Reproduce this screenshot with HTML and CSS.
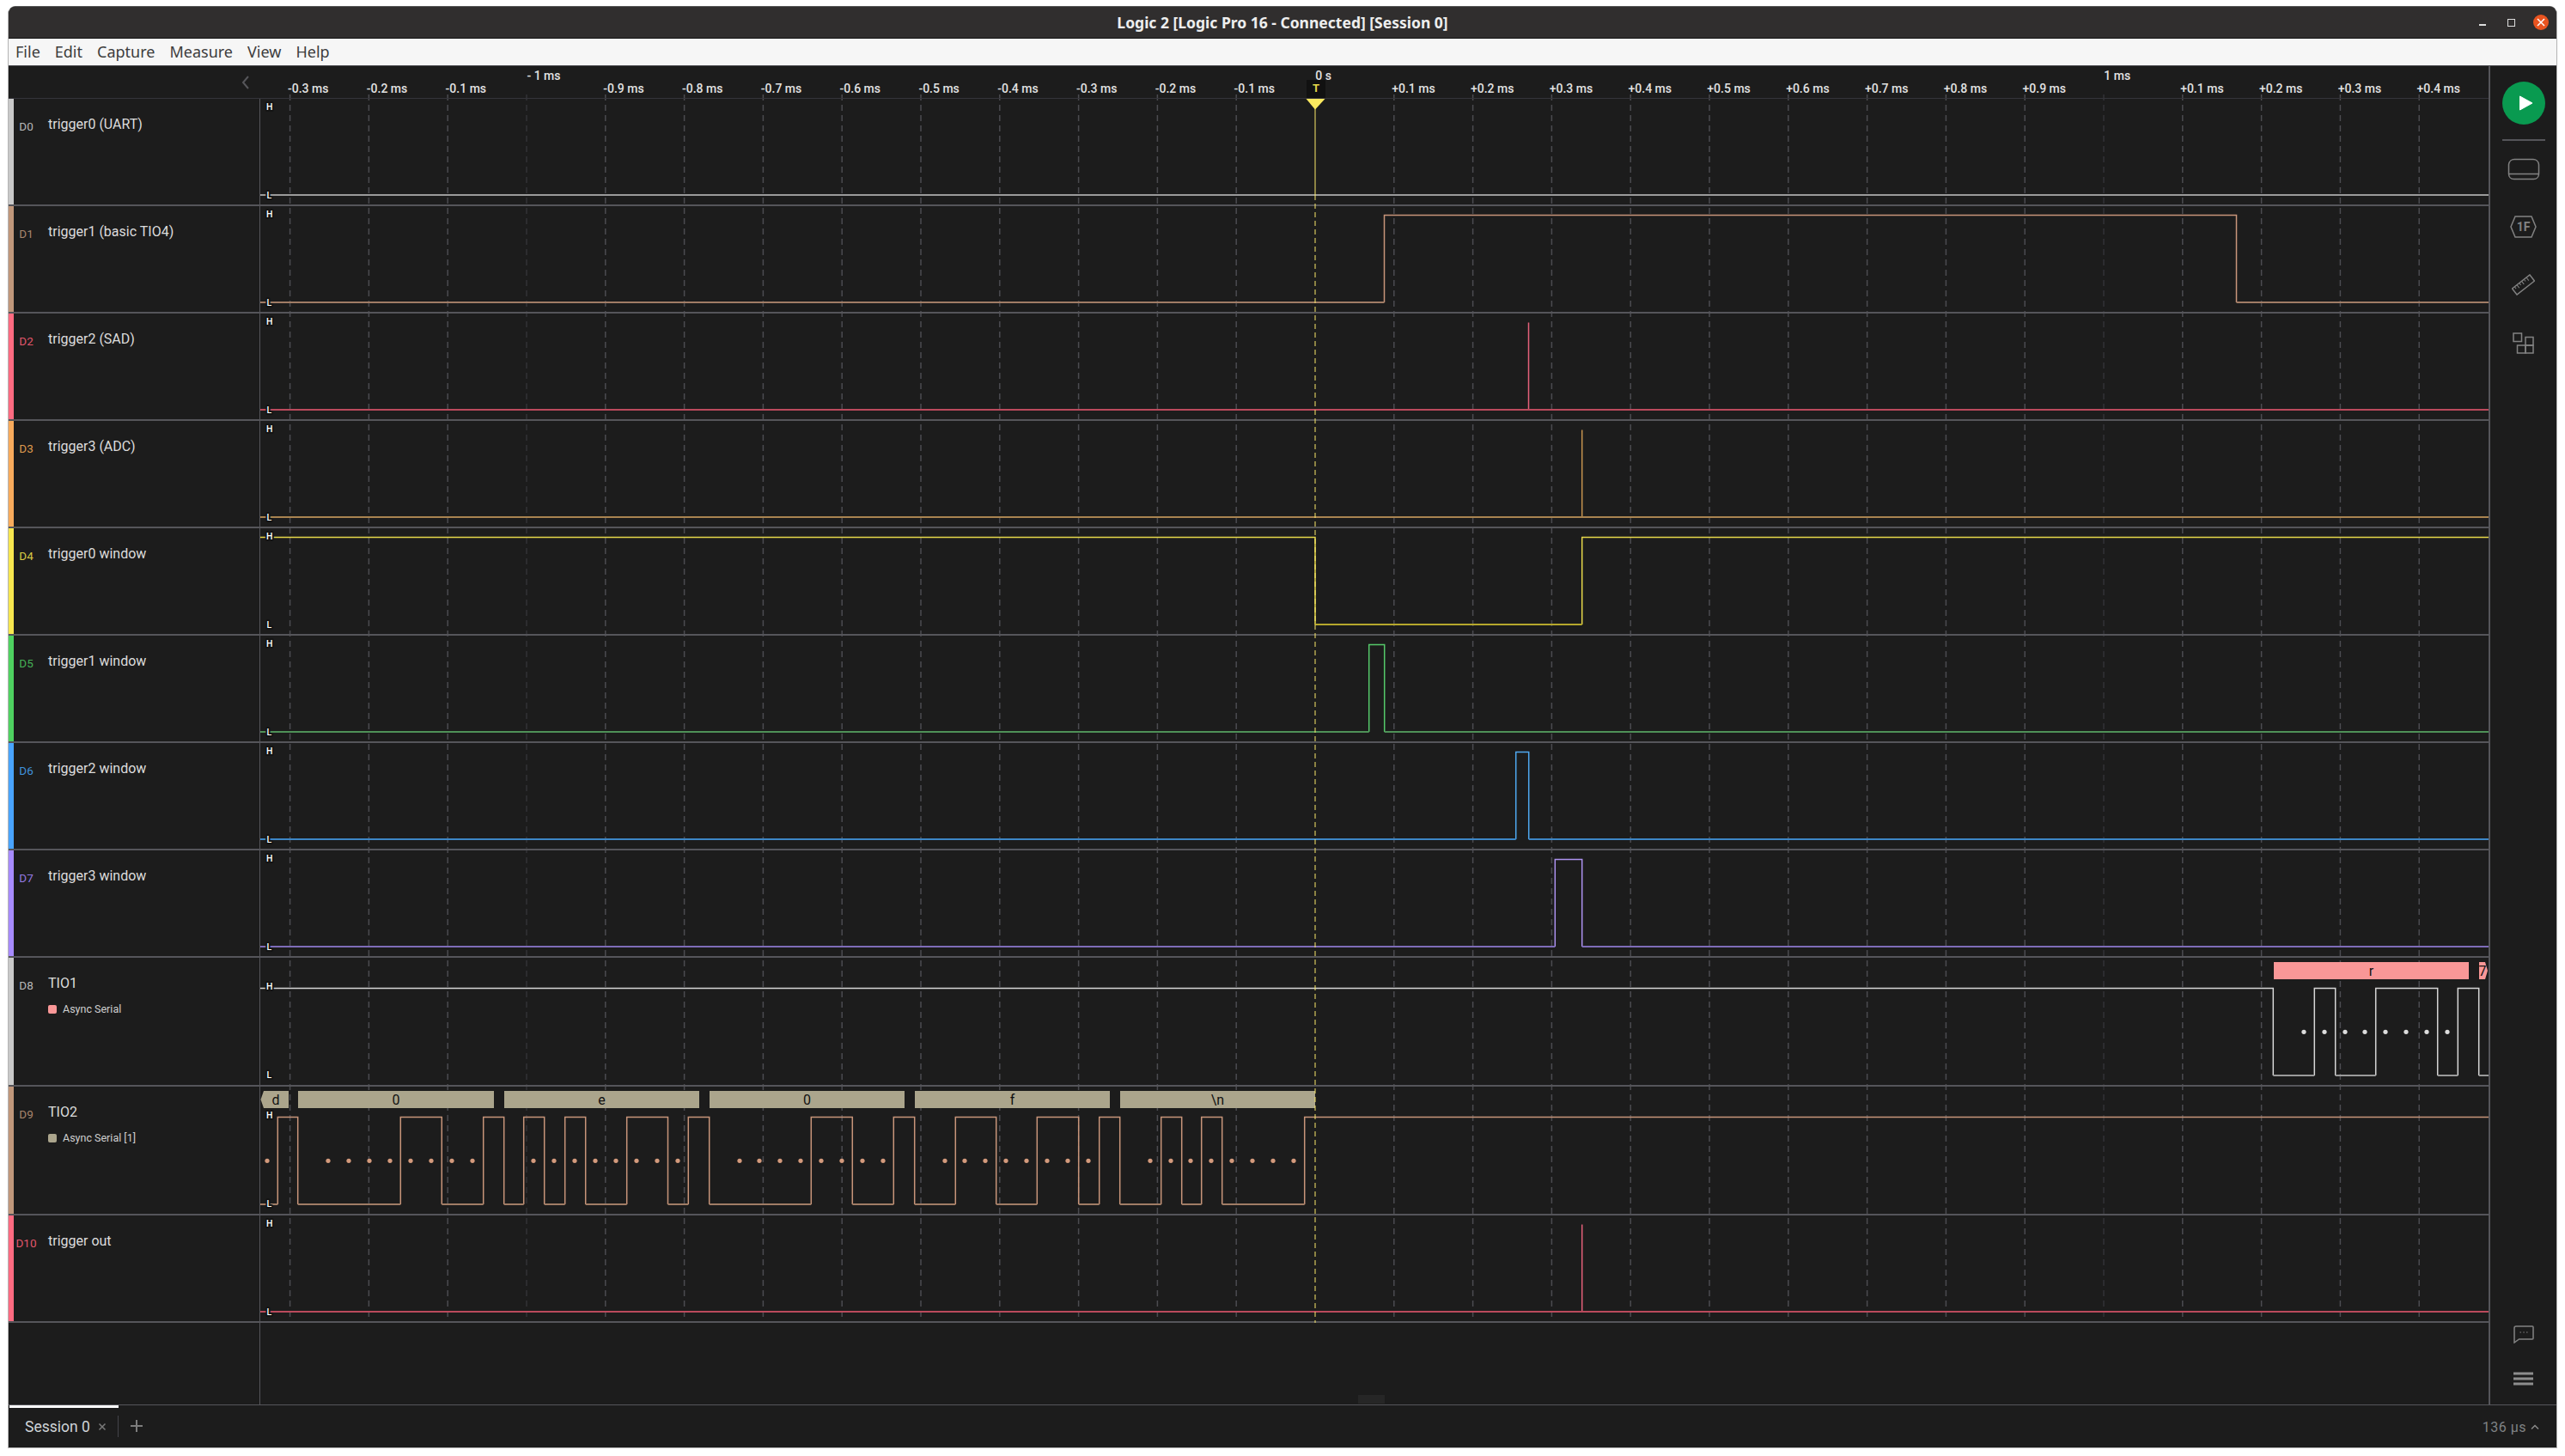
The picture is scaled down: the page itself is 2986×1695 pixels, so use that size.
FILE: index.html
```html
<!DOCTYPE html>
<html lang="en">
<head>
    <meta charset="UTF-8">
    <title>Logic 2 [Logic Pro 16 - Connected] [Session 0]</title>
    <link rel="stylesheet" href="styles.css">
</head>
<body>
<div class="window">
    <!-- Title bar -->
    <header class="titlebar">
        <span class="title">Logic 2 [Logic Pro 16 - Connected] [Session 0]</span>
        <div class="win-buttons">
            <span class="win-min"></span>
            <span class="win-max"></span>
            <span class="win-close">
                <svg width="10" height="10" viewBox="0 0 10 10"><path d="M1 1l8 8M9 1l-8 8"/></svg>
            </span>
        </div>
    </header>

    <nav class="menubar">
        <span>File</span><span>Edit</span><span>Capture</span><span>Measure</span><span>View</span><span>Help</span>
    </nav>

    <div class="main">
        <div class="content">
            <!-- Time grid, sits behind the rows -->
            <svg class="grid" viewBox="10 77 2887 1463">
                <path class="grid-line" d="M337.6 110V1537M429.4 110V1537M521.2 110V1537M704.8 110V1537M796.6 110V1537M888.4 110V1537M980.2 110V1537M1072 110V1537M1163.8 110V1537M1255.6 110V1537M1347.4 110V1537M1439.2 110V1537M1622.8 110V1537M1714.6 110V1537M1806.4 110V1537M1898.2 110V1537M1990 110V1537M2081.8 110V1537M2173.6 110V1537M2265.4 110V1537M2357.2 110V1537M2540.8 110V1537M2632.6 110V1537M2724.4 110V1537M2816.2 110V1537"/>
                <path class="grid-major" d="M613 110V1537M2449 110V1537"/>
            </svg>

            <div class="ruler">
                <div class="ruler-side">
                    <svg width="10" height="16" viewBox="0 0 10 16"><path d="M8 1L2 8l6 7"/></svg>
                </div>
                <div class="ticks">
                    <span class="tick">-0.3 ms</span><span class="tick">-0.2 ms</span><span class="tick">-0.1 ms</span>
                    <span class="tick major">- 1 ms</span>
                    <span class="tick">-0.9 ms</span><span class="tick">-0.8 ms</span><span class="tick">-0.7 ms</span><span class="tick">-0.6 ms</span><span class="tick">-0.5 ms</span><span class="tick">-0.4 ms</span><span class="tick">-0.3 ms</span><span class="tick">-0.2 ms</span><span class="tick">-0.1 ms</span>
                    <span class="tick major">0 s</span>
                    <span class="tick">+0.1 ms</span><span class="tick">+0.2 ms</span><span class="tick">+0.3 ms</span><span class="tick">+0.4 ms</span><span class="tick">+0.5 ms</span><span class="tick">+0.6 ms</span><span class="tick">+0.7 ms</span><span class="tick">+0.8 ms</span><span class="tick">+0.9 ms</span>
                    <span class="tick major">1 ms</span>
                    <span class="tick">+0.1 ms</span><span class="tick">+0.2 ms</span><span class="tick">+0.3 ms</span><span class="tick">+0.4 ms</span>
                </div>
            </div>

            <!-- D0 -->
            <div class="row ch-grey">
                <div class="row-label"><span class="ch-num">D0</span><div class="ch-info"><div class="ch-name">trigger0 (UART)</div></div></div>
                <div class="row-trace"><svg class="wave" viewBox="303 0 2594 123">
                    <path class="low" d="M303 112H2897"/>
                    <text class="hl" x="310" y="12.5">H</text><text class="hl" x="310.5" y="115.5">L</text>
                </svg></div>
            </div>
            <!-- D1 -->
            <div class="row ch-tan">
                <div class="row-label"><span class="ch-num">D1</span><div class="ch-info"><div class="ch-name">trigger1 (basic TIO4)</div></div></div>
                <div class="row-trace"><svg class="wave" viewBox="303 0 2594 123">
                    <path class="high" d="M1611.5 112V10.5H2603.5V112"/>
                    <path class="low" d="M303 112H1611.5M2603.5 112H2897"/>
                    <text class="hl" x="310" y="12.5">H</text><text class="hl" x="310.5" y="115.5">L</text>
                </svg></div>
            </div>
            <!-- D2 -->
            <div class="row ch-red">
                <div class="row-label"><span class="ch-num">D2</span><div class="ch-info"><div class="ch-name">trigger2 (SAD)</div></div></div>
                <div class="row-trace"><svg class="wave" viewBox="303 0 2594 123">
                    <path class="high" d="M1779.5 112V10.5"/>
                    <path class="low" d="M303 112H2897"/>
                    <text class="hl" x="310" y="12.5">H</text><text class="hl" x="310.5" y="115.5">L</text>
                </svg></div>
            </div>
            <!-- D3 -->
            <div class="row ch-orange">
                <div class="row-label"><span class="ch-num">D3</span><div class="ch-info"><div class="ch-name">trigger3 (ADC)</div></div></div>
                <div class="row-trace"><svg class="wave" viewBox="303 0 2594 123">
                    <path class="high" d="M1841.7 112V10.5"/>
                    <path class="low" d="M303 112H2897"/>
                    <text class="hl" x="310" y="12.5">H</text><text class="hl" x="310.5" y="115.5">L</text>
                </svg></div>
            </div>
            <!-- D4 -->
            <div class="row ch-yellow">
                <div class="row-label"><span class="ch-num">D4</span><div class="ch-info"><div class="ch-name">trigger0 window</div></div></div>
                <div class="row-trace"><svg class="wave" viewBox="303 0 2594 123">
                    <path class="high" d="M303 10.5H1531V112M1841.7 112V10.5H2897"/>
                    <path class="low" d="M1531 112H1841.7"/>
                    <text class="hl" x="310" y="12.5">H</text><text class="hl" x="310.5" y="115.5">L</text>
                </svg></div>
            </div>
            <!-- D5 -->
            <div class="row ch-green">
                <div class="row-label"><span class="ch-num">D5</span><div class="ch-info"><div class="ch-name">trigger1 window</div></div></div>
                <div class="row-trace"><svg class="wave" viewBox="303 0 2594 123">
                    <path class="high" d="M1593.7 112V10.5H1611.7V112"/>
                    <path class="low" d="M303 112H1593.7M1611.7 112H2897"/>
                    <text class="hl" x="310" y="12.5">H</text><text class="hl" x="310.5" y="115.5">L</text>
                </svg></div>
            </div>
            <!-- D6 -->
            <div class="row ch-blue">
                <div class="row-label"><span class="ch-num">D6</span><div class="ch-info"><div class="ch-name">trigger2 window</div></div></div>
                <div class="row-trace"><svg class="wave" viewBox="303 0 2594 123">
                    <path class="high" d="M1764.7 112V10.5H1779.7V112"/>
                    <path class="low" d="M303 112H1764.7M1779.7 112H2897"/>
                    <text class="hl" x="310" y="12.5">H</text><text class="hl" x="310.5" y="115.5">L</text>
                </svg></div>
            </div>
            <!-- D7 -->
            <div class="row ch-purple">
                <div class="row-label"><span class="ch-num">D7</span><div class="ch-info"><div class="ch-name">trigger3 window</div></div></div>
                <div class="row-trace"><svg class="wave" viewBox="303 0 2594 123">
                    <path class="high" d="M1810.3 112V10.5H1841.7V112"/>
                    <path class="low" d="M303 112H1810.3M1841.7 112H2897"/>
                    <text class="hl" x="310" y="12.5">H</text><text class="hl" x="310.5" y="115.5">L</text>
                </svg></div>
            </div>
            <!-- D8 with analyzer -->
            <div class="row row-tall ch-grey">
                <div class="row-label"><span class="ch-num">D8</span><div class="ch-info">
                    <div class="ch-name">TIO1</div>
                    <div class="analyzer"><i class="swatch swatch-pink"></i>Async Serial</div>
                </div></div>
                <div class="row-trace"><svg class="wave" viewBox="303 0 2594 148">
                    <rect class="frame-pink" x="2647" y="5" width="227" height="20"/>
                    <polygon class="frame-pink" points="2886,5 2893,5 2896,15 2893,25 2886,25"/>
                    <text class="frame-text" x="2760.5" y="20.5">r</text>
                    <text class="frame-text" x="2890" y="20.5">7</text>
                    <path class="high" d="M303 35.5H2646.3V137M2694.3 137V35.5H2718.7V137M2765.7 137V35.5H2837.7V137M2861.3 137V35.5H2885.7V137"/>
                    <path class="low" d="M2646.3 137H2694.3M2718.7 137H2765.7M2837.7 137H2861.3M2885.7 137H2897"/>
                    <g class="dots">
                        <circle cx="2682" cy="86.3" r="2.6"/><circle cx="2706" cy="86.3" r="2.6"/><circle cx="2730" cy="86.3" r="2.6"/><circle cx="2753" cy="86.3" r="2.6"/><circle cx="2777" cy="86.3" r="2.6"/><circle cx="2801" cy="86.3" r="2.6"/><circle cx="2825" cy="86.3" r="2.6"/><circle cx="2849" cy="86.3" r="2.6"/>
                    </g>
                    <text class="hl" x="310" y="37">H</text><text class="hl" x="310.5" y="140">L</text>
                </svg></div>
            </div>
            <!-- D9 with analyzer -->
            <div class="row row-tall ch-tan">
                <div class="row-label"><span class="ch-num">D9</span><div class="ch-info">
                    <div class="ch-name">TIO2</div>
                    <div class="analyzer"><i class="swatch swatch-khaki"></i>Async Serial [1]</div>
                </div></div>
                <div class="row-trace"><svg class="wave" viewBox="303 0 2594 148">
                    <polygon class="frame-khaki" points="303.5,15 307,5 336,5 336,25 307,25"/>
                    <rect class="frame-khaki" x="347" y="5" width="228" height="20"/>
                    <rect class="frame-khaki" x="587" y="5" width="227" height="20"/>
                    <rect class="frame-khaki" x="826" y="5" width="227" height="20"/>
                    <rect class="frame-khaki" x="1065" y="5" width="227" height="20"/>
                    <rect class="frame-khaki" x="1304" y="5" width="227" height="20"/>
                    <text class="frame-text" x="321" y="20.5">d</text>
                    <text class="frame-text" x="461" y="20.5">0</text>
                    <text class="frame-text" x="700.5" y="20.5">e</text>
                    <text class="frame-text" x="939.5" y="20.5">0</text>
                    <text class="frame-text" x="1178.5" y="20.5">f</text>
                    <text class="frame-text" x="1417.5" y="20.5">\n</text>
                    <path class="high" d="M323.3 137V35.5H346.7V137M466.3 137V35.5H514.3V137M562.7 137V35.5H586.7V137M609.7 137V35.5H633.7V137M657.7 137V35.5H681.7V137M729.7 137V35.5H777.5V137M801.3 137V35.5H825.7V137M944.3 137V35.5H992.3V137M1040.3 137V35.5H1064.7V137M1112.3 137V35.5H1159.7V137M1207.3 137V35.5H1255.7V137M1279.7 137V35.5H1303.7V137M1351.7 137V35.5H1375.7V137M1398.7 137V35.5H1422.7V137M1518.7 137V35.5H2897"/>
                    <path class="low" d="M303 137H323.3M346.7 137H466.3M514.3 137H562.7M586.7 137H609.7M633.7 137H657.7M681.7 137H729.7M777.5 137H801.3M825.7 137H944.3M992.3 137H1040.3M1064.7 137H1112.3M1159.7 137H1207.3M1255.7 137H1279.7M1303.7 137H1351.7M1375.7 137H1398.7M1422.7 137H1518.7"/>
                    <g class="dots">
                        <circle cx="311" cy="86.3" r="2.6"/><circle cx="382" cy="86.3" r="2.6"/><circle cx="406" cy="86.3" r="2.6"/><circle cx="430" cy="86.3" r="2.6"/><circle cx="454" cy="86.3" r="2.6"/><circle cx="478" cy="86.3" r="2.6"/><circle cx="502" cy="86.3" r="2.6"/><circle cx="526" cy="86.3" r="2.6"/><circle cx="550" cy="86.3" r="2.6"/>
                        <circle cx="621" cy="86.3" r="2.6"/><circle cx="645" cy="86.3" r="2.6"/><circle cx="669" cy="86.3" r="2.6"/><circle cx="693" cy="86.3" r="2.6"/><circle cx="717" cy="86.3" r="2.6"/><circle cx="741" cy="86.3" r="2.6"/><circle cx="765" cy="86.3" r="2.6"/><circle cx="789" cy="86.3" r="2.6"/>
                        <circle cx="861" cy="86.3" r="2.6"/><circle cx="884" cy="86.3" r="2.6"/><circle cx="908" cy="86.3" r="2.6"/><circle cx="932" cy="86.3" r="2.6"/><circle cx="956" cy="86.3" r="2.6"/><circle cx="980" cy="86.3" r="2.6"/><circle cx="1004" cy="86.3" r="2.6"/><circle cx="1028" cy="86.3" r="2.6"/>
                        <circle cx="1100" cy="86.3" r="2.6"/><circle cx="1123" cy="86.3" r="2.6"/><circle cx="1147" cy="86.3" r="2.6"/><circle cx="1171" cy="86.3" r="2.6"/><circle cx="1195" cy="86.3" r="2.6"/><circle cx="1219" cy="86.3" r="2.6"/><circle cx="1243" cy="86.3" r="2.6"/><circle cx="1267" cy="86.3" r="2.6"/>
                        <circle cx="1339" cy="86.3" r="2.6"/><circle cx="1363" cy="86.3" r="2.6"/><circle cx="1386" cy="86.3" r="2.6"/><circle cx="1410" cy="86.3" r="2.6"/><circle cx="1434" cy="86.3" r="2.6"/><circle cx="1458" cy="86.3" r="2.6"/><circle cx="1482" cy="86.3" r="2.6"/><circle cx="1506" cy="86.3" r="2.6"/>
                    </g>
                    <text class="hl" x="310" y="37">H</text><text class="hl" x="310.5" y="140">L</text>
                </svg></div>
            </div>
            <!-- D10 -->
            <div class="row ch-red">
                <div class="row-label"><span class="ch-num">D10</span><div class="ch-info"><div class="ch-name">trigger out</div></div></div>
                <div class="row-trace"><svg class="wave" viewBox="303 0 2594 123">
                    <path class="high" d="M1841.7 112V10.5"/>
                    <path class="low" d="M303 112H2897"/>
                    <text class="hl" x="310" y="12.5">H</text><text class="hl" x="310.5" y="115.5">L</text>
                </svg></div>
            </div>

            <div class="row-blank">
                <div class="blank-side"></div>
                <div class="grabber"></div>
            </div>

            <!-- Trigger marker, over the rows -->
            <svg class="cursor" viewBox="10 77 2887 1463">
                <path class="cursor-solid" d="M1531 125V227"/>
                <path class="cursor-dash" d="M1531 227V1540"/>
                <polygon class="cursor-head" points="1520.5,115 1542.5,115 1531,127.5"/>
            </svg>
            <span class="trigger-t">T</span>
        </div>

        <!-- Right tool strip -->
        <aside class="sidebar">
            <div class="play">
                <svg width="18" height="18" viewBox="0 0 18 18"><path d="M2.5 1L17 9 2.5 17z" fill="#fff" stroke="#fff" stroke-linejoin="round"/></svg>
            </div>
            <div class="side-divider"></div>
            <div class="tool">
                <svg width="38" height="26" viewBox="0 0 38 26"><path d="M8 1.5h22c3 0 6 2 6.5 6v11c0 3.500-2.500 6-6 6h-23c-3.500 0-6-2.500-6-6v-11c.5-4 3.500-6 6.500-6zM1.500 18.500h35"/></svg>
            </div>
            <div class="tool">
                <svg width="31" height="26" viewBox="0 0 31 26"><polygon points="6,1 25,1 30,13 25,25 6,25 1,13"/><text class="tool-text" x="15.5" y="18">1F</text></svg>
            </div>
            <div class="tool">
                <svg width="27" height="25" viewBox="0 0 27 25"><g transform="rotate(-38 13.5 12.5)"><rect x="0.5" y="8" width="26" height="9"/><path class="thin" d="M4 8v3M7.5 8v4.5M11 8v3M14.5 8v4.5M18 8v3M21.5 8v4.5"/></g></svg>
            </div>
            <div class="tool">
                <svg width="25" height="25" viewBox="0 0 25 25"><rect x="1" y="1" width="9.5" height="9.5"/><rect x="15" y="5.5" width="9" height="9.5"/><rect x="5.5" y="15" width="9.5" height="9"/><rect x="15" y="15" width="9" height="9"/></svg>
            </div>
            <div class="side-bottom">
                <div class="tool-small">
                    <svg width="24" height="21" viewBox="0 0 24 21"><path d="M3 1h19a1 1 0 0 1 1 1v13a1 1 0 0 1-1 1H6.500L1 20V3a2 2 0 0 1 2-2z"/><path class="thin" d="M7.5 8h1.500M11.300 8h1.500M15 8h1.500"/></svg>
                </div>
                <div class="tool-small">
                    <svg width="25" height="16" viewBox="0 0 25 16"><path class="bars" d="M1 2h23M1 8h23M1 14h23"/></svg>
                </div>
            </div>
        </aside>
    </div>

    <footer class="footer">
        <div class="tab">
            <span class="tab-name">Session 0</span>
            <svg class="tab-x" width="10" height="10" viewBox="0 0 10 10"><path d="M1.5 1.5l7 7M8.5 1.5l-7 7"/></svg>
        </div>
        <svg class="tab-add" width="14" height="14" viewBox="0 0 14 14"><path d="M7 0v14M0 7h14"/></svg>
        <div class="status">
            <span>136 µs</span>
            <svg width="10" height="7" viewBox="0 0 10 7"><path d="M1 5.500l4-4 4 4"/></svg>
        </div>
    </footer>
</div>
</body>
</html>
```

FILE: styles.css
```css
html, body {
    margin: 0;
    background-color: #fff;
    height: 100%;
}
body {
    font-family: Roboto, "Liberation Sans", sans-serif;
    overflow: hidden;
}
.window {
    box-sizing: border-box;
    width: 2968px;
    height: 1679px;
    margin: 7px 0 0 9px;
    border: 1px solid #b4b4b4;
    border-top-color: #555;
    border-radius: 9px 9px 0 0;
    background-color: #1c1c1c;
    display: flex;
    flex-direction: column;
    overflow: hidden;
}

/* Title bar */
.titlebar {
    box-sizing: border-box;
    flex: none;
    height: 37px;
    background-color: #302e2e;
    border-bottom: 1px solid #111;
    position: relative;
    display: flex;
    align-items: center;
    justify-content: center;
}
.title {
    font-family: "Noto Sans", sans-serif;
    font-weight: 700;
    font-size: 17.5px;
    color: #eee;
}
.win-buttons {
    position: absolute;
    right: 9px;
    top: 9px;
    display: flex;
    align-items: center;
    gap: 21px;
}
.win-min {
    width: 8px;
    height: 2px;
    margin-top: 6px;
    background-color: #ddd;
}
.win-max {
    box-sizing: border-box;
    width: 9px;
    height: 9px;
    border: 1.5px solid #ddd;
    margin-left: 4px;
}
.win-close {
    width: 18px;
    height: 18px;
    border-radius: 50%;
    background-color: #e95420;
    display: flex;
    align-items: center;
    justify-content: center;
}
.win-close path {
    stroke: #fff;
    stroke-width: 1.5;
}

.menubar {
    box-sizing: border-box;
    flex: none;
    height: 32px;
    background-color: #f6f6f6;
    border-bottom: 1px solid #4a4a4e;
    display: flex;
    align-items: center;
    gap: 17px;
    padding: 0 0 1px 8px;
    font-family: "Noto Sans", sans-serif;
    font-size: 18px;
    color: #3d3d3d;
}

.main {
    flex: 1;
    display: flex;
    min-height: 0;
}
.content {
    flex: 1;
    position: relative;
    display: flex;
    flex-direction: column;
    min-width: 0;
}

/* Time grid and trigger cursor */
.grid, .cursor {
    position: absolute;
    left: 0;
    top: 0;
    width: 2887px;
    height: 1463px;
    pointer-events: none;
}
.grid-line {
    stroke: #4b4b50;
    stroke-width: 1.5;
    stroke-dasharray: 7 5;
    fill: none;
}
.grid-major {
    stroke: #323236;
    stroke-width: 1.5;
    stroke-dasharray: 7 5;
    fill: none;
}
.cursor {
    z-index: 3;
}
.cursor-solid {
    stroke: #fbe96a;
    stroke-width: 1;
}
.cursor-dash {
    stroke: #fbe96a;
    stroke-width: 1;
    stroke-dasharray: 6 4;
}
.cursor-head {
    fill: #fbe95f;
}
.trigger-t {
    position: absolute;
    left: 1511px;
    top: 16px;
    z-index: 3;
    box-sizing: border-box;
    width: 22px;
    height: 21px;
    background-color: #111;
    color: #e6d94a;
    font-size: 13px;
    font-weight: 700;
    line-height: 20px;
    text-align: center;
}

/* Ruler */
.ruler {
    box-sizing: border-box;
    flex: none;
    height: 38px;
    border-bottom: 1px solid #34343a;
    display: flex;
    position: relative;
}
.ruler-side {
    box-sizing: border-box;
    flex: none;
    width: 292px;
    display: flex;
    justify-content: flex-end;
    padding: 11px 11px 0 0;
}
.ruler-side svg {
    height: 16px;
}
.ruler-side path {
    fill: none;
    stroke: #56565a;
    stroke-width: 2;
}
.ticks {
    display: flex;
    margin-left: 33px;
}
.tick {
    box-sizing: border-box;
    flex: 0 0 91.8px;
    padding-top: 18px;
    font-size: 14px;
    font-weight: 500;
    line-height: 16px;
    color: #e2e2e2;
    white-space: nowrap;
}
.tick.major {
    padding: 3px 0 0 3px;
}

/* Channel colours */
.ch-grey { --strip: #c9c9c9; --num: #b8b8b8; --high: #d6d6d6; --low: #9a9a9a; }
.ch-tan { --strip: #c0977b; --num: #a9866d; --high: #c8957a; --low: #a07c65; }
.ch-red { --strip: #ff6b81; --num: #e0566b; --high: #e4607a; --low: #bb4a5c; }
.ch-orange { --strip: #f8ab5c; --num: #df9a4e; --high: #c6934f; --low: #a98450; }
.ch-yellow { --strip: #f7e74f; --num: #d8ca44; --high: #e6d84a; --low: #b5a72c; }
.ch-green { --strip: #4ed160; --num: #45b056; --high: #55c96a; --low: #4f9158; }
.ch-blue { --strip: #49a4ff; --num: #4093dd; --high: #4fa8f0; --low: #3d86c6; }
.ch-purple { --strip: #a78bff; --num: #9278e0; --high: #ad92f0; --low: #7e6cb8; }

/* Rows */
.row {
    box-sizing: border-box;
    flex: none;
    height: 125px;
    display: flex;
    border-bottom: 2px solid #55555a;
    position: relative;
}
.row-tall {
    height: 150px;
}
.row-label {
    box-sizing: border-box;
    flex: none;
    width: 293px;
    display: flex;
    border-left: 6px solid var(--strip);
    border-right: 1px solid #55555a;
    background-color: #1c1c1c;
    padding-top: 21px;
}
.ch-num {
    flex: none;
    width: 29px;
    margin-top: 3px;
    text-align: center;
    font-size: 13.5px;
    line-height: 16px;
    color: var(--num);
}
.ch-info {
    margin-left: 11px;
}
.ch-name {
    font-size: 16px;
    line-height: 18px;
    color: #dcdcdc;
}
.analyzer {
    display: flex;
    align-items: center;
    margin-top: 13px;
    font-size: 12.5px;
    line-height: 16px;
    color: #cfcfcf;
}
.swatch {
    width: 10px;
    height: 10px;
    border-radius: 2px;
    margin-right: 7px;
}
.swatch-pink {
    background-color: #f99797;
}
.swatch-khaki {
    background-color: #aba58c;
}
.row-trace {
    flex: 1;
    min-width: 0;
}
.wave {
    display: block;
    width: 2594px;
    height: 100%;
}
.wave path {
    fill: none;
}
.high {
    stroke: var(--high);
    stroke-width: 1.5;
}
.low {
    stroke: var(--low);
    stroke-width: 2;
}
.dots circle {
    fill: var(--high);
}
.ch-grey .dots circle {
    fill: #dcdcdc;
}
.ch-tan .dots circle {
    fill: #d49a7c;
}
.hl {
    font-size: 10.5px;
    font-weight: 500;
    fill: #fff;
    stroke: #141414;
    stroke-width: 4px;
    stroke-linejoin: round;
    paint-order: stroke;
}
.frame-pink {
    fill: #f99797;
}
.frame-khaki {
    fill: #aba58c;
}
.frame-text {
    font-size: 16px;
    fill: #111;
    text-anchor: middle;
}

.row-blank {
    flex: 1;
    position: relative;
    display: flex;
}
.blank-side {
    box-sizing: border-box;
    width: 293px;
    border-right: 1px solid #55555a;
    background-color: #1c1c1c;
}
.grabber {
    position: absolute;
    left: 1571px;
    bottom: 1px;
    width: 31px;
    height: 10px;
    background-color: #262626;
}

/* Sidebar */
.sidebar {
    box-sizing: border-box;
    flex: none;
    width: 79px;
    border-left: 2px solid #55555a;
    background-color: #1c1c1c;
    display: flex;
    flex-direction: column;
    align-items: center;
    padding-top: 18px;
    position: relative;
    z-index: 4;
}
.play {
    flex: none;
    width: 50px;
    height: 50px;
    border-radius: 50%;
    background-color: #099a50;
    display: flex;
    align-items: center;
    justify-content: center;
}
.play svg {
    margin-left: 4px;
}
.side-divider {
    flex: none;
    width: 50px;
    height: 2px;
    margin: 17px 0 -1px;
    background-color: #55555a;
}
.tool {
    flex: none;
    height: 67.5px;
    display: flex;
    align-items: center;
}
.tool svg, .tool-small svg {
    fill: none;
    stroke: #828282;
    stroke-width: 1.5;
}
.tool .thin, .tool-small .thin {
    stroke-width: 1;
}
.tool-text {
    font-size: 14px;
    font-weight: 700;
    fill: #828282;
    stroke: none;
    text-anchor: middle;
}
.side-bottom {
    margin-top: auto;
    padding-bottom: 5px;
}
.tool-small {
    height: 51px;
    display: flex;
    align-items: center;
    justify-content: center;
}
.tool-small .bars {
    stroke: #8d8d8d;
    stroke-width: 3;
}

/* Footer with session tabs */
.footer {
    box-sizing: border-box;
    flex: none;
    height: 50px;
    border-top: 1px solid #55555a;
    display: flex;
    align-items: center;
    padding-right: 20px;
    position: relative;
    z-index: 4;
    background-color: #1c1c1c;
}
.tab {
    box-sizing: border-box;
    align-self: stretch;
    width: 127px;
    margin-left: 1px;
    border-top: 3px solid #fff;
    padding: 0 0 3px 18px;
    display: flex;
    align-items: center;
    gap: 9px;
    position: relative;
}
.tab::after {
    content: "";
    position: absolute;
    right: 0;
    top: 9px;
    width: 1px;
    height: 25px;
    background-color: #44444a;
}
.tab-name {
    font-size: 17.5px;
    color: #cfd3d8;
}
.tab-x path {
    stroke: #7a7a7a;
    stroke-width: 1.5;
}
.tab-add {
    margin: 0 0 1px 14px;
}
.tab-add path {
    stroke: #7d7d7d;
    stroke-width: 2;
}
.status {
    margin-left: auto;
    padding-top: 1px;
    display: flex;
    align-items: center;
    gap: 5px;
    font-size: 16px;
    letter-spacing: 0.5px;
    color: #7f8285;
}
.status path {
    fill: none;
    stroke: #8a8a8a;
    stroke-width: 1.5;
}
```
